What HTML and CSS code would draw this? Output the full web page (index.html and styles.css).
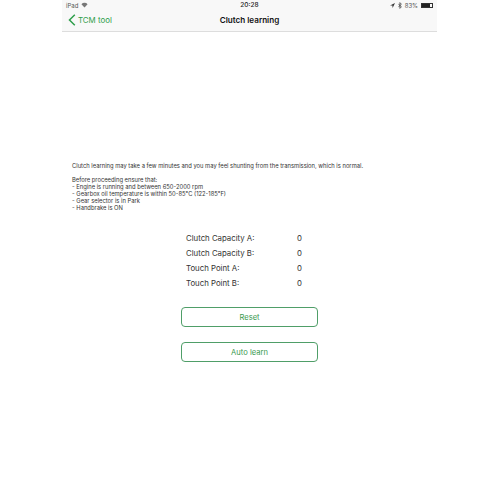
FILE: index.html
```html
<!DOCTYPE html>
<html lang="en">
  <head>
    <meta charset="UTF-8" />
    <title>Clutch learning</title>
    <link rel="stylesheet" href="styles.css">
  </head>
  <body>
    <div class="screen">
      <div class="top-bar">
        <div class="status-bar">
          <div class="status-left">
            <span>iPad</span>
            <svg class="wifi" width="7" height="6" viewBox="0 0 8 6">
              <path d="M0.5 2 A5 5 0 0 1 7.5 2 L4 5.8 Z" fill="#777" />
            </svg>
          </div>
          <span class="status-time">20:28</span>
          <div class="status-right">
            <svg width="5" height="5" viewBox="0 0 5 5">
              <path d="M5 0 L0 2.4 L2.4 2.6 L2.6 5 Z" fill="#333" />
            </svg>
            <svg width="4" height="7" viewBox="0 0 4 7">
              <path d="M0.3 1.8 L3.4 4.9 L1.9 6.4 V0.6 L3.4 2.1 L0.3 5.2" fill="none" stroke="#333" stroke-width="0.7" />
            </svg>
            <span>83%</span>
            <div class="battery"><div class="battery-level"></div></div>
          </div>
        </div>
        <div class="nav-bar">
          <div class="back">
            <svg width="8" height="12" viewBox="0 0 8 12">
              <path d="M6.8 0.8 L1.5 6 L6.8 11.2" fill="none" stroke="#2e9e4a" stroke-width="1.5" />
            </svg>
            <span>TCM tool</span>
          </div>
          <span class="nav-title">Clutch learning</span>
        </div>
      </div>

      <div class="info">
        <p>Clutch learning may take a few minutes and you may feel shunting from the transmission, which is normal.</p>
        <p>
          Before proceeding ensure that:<br />
          - Engine is running and between 650-2000 rpm<br />
          - Gearbox oil temperature is within 50-85°C (122-185°F)<br />
          - Gear selector is in Park<br />
          - Handbrake is ON
        </p>
      </div>

      <div class="values">
        <span>Clutch Capacity A:</span><span>0</span>
        <span>Clutch Capacity B:</span><span>0</span>
        <span>Touch Point A:</span><span>0</span>
        <span>Touch Point B:</span><span>0</span>
      </div>

      <div class="actions">
        <button class="btn">Reset</button>
        <button class="btn">Auto learn</button>
      </div>
    </div>
  </body>
</html>
```

FILE: styles.css
```css
/* Basic styling */
body {
  font-family: Inter, "Liberation Sans", sans-serif;
  margin: 0;
  padding: 0;
  background-color: #ffffff;
  color: #222222;
}

.screen {
  width: 375px;
  height: 500px;
  margin: 0 0 0 62px;
  display: flex;
  flex-direction: column;
}

.top-bar {
  height: 31px;
  background-color: #f8f8f8;
  border-bottom: 1px solid #dddddd;
}

.status-bar {
  height: 10px;
  padding: 0 4px 0 4px;
  display: flex;
  align-items: center;
  justify-content: space-between;
  position: relative;
  font-size: 6px;
  color: #555555;
}

.status-left,
.status-right {
  display: flex;
  align-items: center;
  gap: 3px;
}

.status-time {
  position: absolute;
  left: 0;
  right: 0;
  text-align: center;
  font-size: 6.5px;
  font-weight: 500;
  color: #222222;
}

.battery {
  width: 12px;
  height: 5px;
  border: 0.5px solid #333333;
  box-sizing: border-box;
}

.battery-level {
  width: 83%;
  height: 100%;
  background-color: #222222;
}

.nav-bar {
  height: 20px;
  padding: 0 6px;
  display: flex;
  align-items: center;
  position: relative;
}

.back {
  display: flex;
  align-items: center;
  gap: 2px;
  font-size: 7.9px;
  color: #2e9e4a;
}

.nav-title {
  position: absolute;
  left: 0;
  right: 0;
  text-align: center;
  font-size: 8.1px;
  font-weight: 600;
  color: #111111;
}

.info {
  margin-top: 130px;
  padding: 0 10px;
  font-size: 5.82px;
  line-height: 7px;
  color: #333333;
}

.info p {
  margin: 0 0 7px 0;
}

.values {
  margin: 12px 0 0 124px;
  display: grid;
  grid-template-columns: 111px auto;
  grid-auto-rows: 15px;
  align-items: center;
  font-size: 7.8px;
  color: #333333;
}

.actions {
  margin-top: 17px;
  display: flex;
  flex-direction: column;
  align-items: center;
  gap: 15px;
}

.btn {
  width: 137px;
  height: 20px;
  padding: 0;
  font-family: inherit;
  font-size: 7.6px;
  color: #3a9a50;
  background-color: #ffffff;
  border: 1px solid #4f9e68;
  border-radius: 4px;
}
```
